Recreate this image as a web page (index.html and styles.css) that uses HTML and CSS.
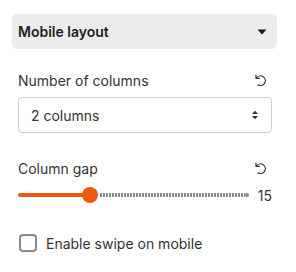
FILE: index.html
```html
<!DOCTYPE html>
<html>
<head>
<meta charset="utf-8">
<link rel="stylesheet" href="styles.css">
</head>
<body>
<div class="panel">
  <div class="header">
    <span class="header-title">Mobile layout</span>
    <svg class="caret" width="10" height="6" viewBox="0 0 10 6"><path d="M0.5 0.5 H9.5 L5 5.5 Z" fill="#1a1a1a"/></svg>
  </div>
  <div class="body">
    <div class="field">
      <div class="label-row">
        <span class="label">Number of columns</span>
        <svg class="reset" width="12" height="12" viewBox="0 0 12 12"><path d="M2.4 4.2 A4.8 4.8 0 1 1 4.2 10.9" fill="none" stroke="#3a3a3a" stroke-width="1.3" stroke-linecap="round"/><path d="M2 1.2 V4.4 H5.2" fill="none" stroke="#3a3a3a" stroke-width="1.3" stroke-linecap="round" stroke-linejoin="round"/></svg>
      </div>
      <div class="select">
        <span>2 columns</span>
        <svg class="updown" width="8" height="10" viewBox="0 0 8 10"><path d="M1 4 L4 0.8 L7 4 Z M1 6 L4 9.2 L7 6 Z" fill="#333"/></svg>
      </div>
    </div>
    <div class="field gap-field">
      <div class="label-row">
        <span class="label">Column gap</span>
        <svg class="reset" width="12" height="12" viewBox="0 0 12 12"><path d="M2.4 4.2 A4.8 4.8 0 1 1 4.2 10.9" fill="none" stroke="#3a3a3a" stroke-width="1.3" stroke-linecap="round"/><path d="M2 1.2 V4.4 H5.2" fill="none" stroke="#3a3a3a" stroke-width="1.3" stroke-linecap="round" stroke-linejoin="round"/></svg>
      </div>
      <div class="slider-row">
        <div class="slider">
          <div class="fill" style="width:72px"></div>
          <div class="thumb"></div>
          <div class="dots"></div>
          <div class="end"></div>
        </div>
        <span class="value">15</span>
      </div>
    </div>
    <label class="check">
      <span class="box"></span>
      <span class="check-label">Enable swipe on mobile</span>
    </label>
  </div>
</div>
</body>
</html>
```
FILE: styles.css
```css
* { box-sizing: border-box; }
html, body { margin: 0; padding: 0; background: #fff; }
body {
  font-family: Inter, "Noto Sans", sans-serif;
  color: #333333;
  width: 296px;
}
.panel {
  padding: 14px 19px 0 12px;
}
.header {
  height: 35px;
  background: #ececee;
  border-radius: 5px;
  display: flex;
  align-items: center;
  justify-content: space-between;
  padding: 0 10px 0 6px;
}
.header-title {
  font-size: 14px;
  font-weight: 600;
  color: #1e1e1e;
}
.caret { display: block; }
.body {
  padding: 0 5px 0 6px;
}
.field { margin-top: 21px; }
.gap-field { margin-top: 25px; }
.label-row {
  display: flex;
  align-items: center;
  justify-content: space-between;
  height: 20px;
  padding-right: 6px;
}
.label { font-size: 14px; color: #333333; }
.reset { display: block; }
.select {
  margin-top: 7px;
  height: 36px;
  border: 1px solid #cfcfd2;
  border-radius: 4px;
  display: flex;
  align-items: center;
  justify-content: space-between;
  padding: 0 12px 0 12px;
  font-size: 14px;
  color: #333333;
}
.updown { display: block; }
.slider-row {
  margin-top: 8px;
  display: flex;
  align-items: center;
  height: 18px;
}
.slider {
  position: relative;
  width: 232px;
  height: 18px;
}
.fill {
  position: absolute;
  left: 0;
  top: 7px;
  height: 4px;
  border-radius: 2px;
  background: #eb5a0f;
}
.thumb {
  position: absolute;
  left: 64px;
  top: 1px;
  width: 16px;
  height: 16px;
  border-radius: 50%;
  background: #eb5a0f;
}
.dots {
  position: absolute;
  left: 82px;
  right: 5px;
  top: 7px;
  height: 4px;
  background: repeating-linear-gradient(to right, #8a8a8e 0 2px, transparent 2px 3px);
}
.end {
  position: absolute;
  right: 1px;
  top: 7px;
  width: 4px;
  height: 4px;
  border-radius: 50%;
  background: #8a8a8e;
}
.value {
  margin-left: auto;
  font-size: 14px;
  color: #333333;
}
.check {
  margin-top: 30px;
  display: flex;
  align-items: center;
  gap: 9px;
  padding-left: 1px;
}
.box {
  width: 18px;
  height: 18px;
  border: 2px solid #8a8a8e;
  border-radius: 4px;
}
.check-label {
  font-size: 14px;
  color: #333333;
}
```
